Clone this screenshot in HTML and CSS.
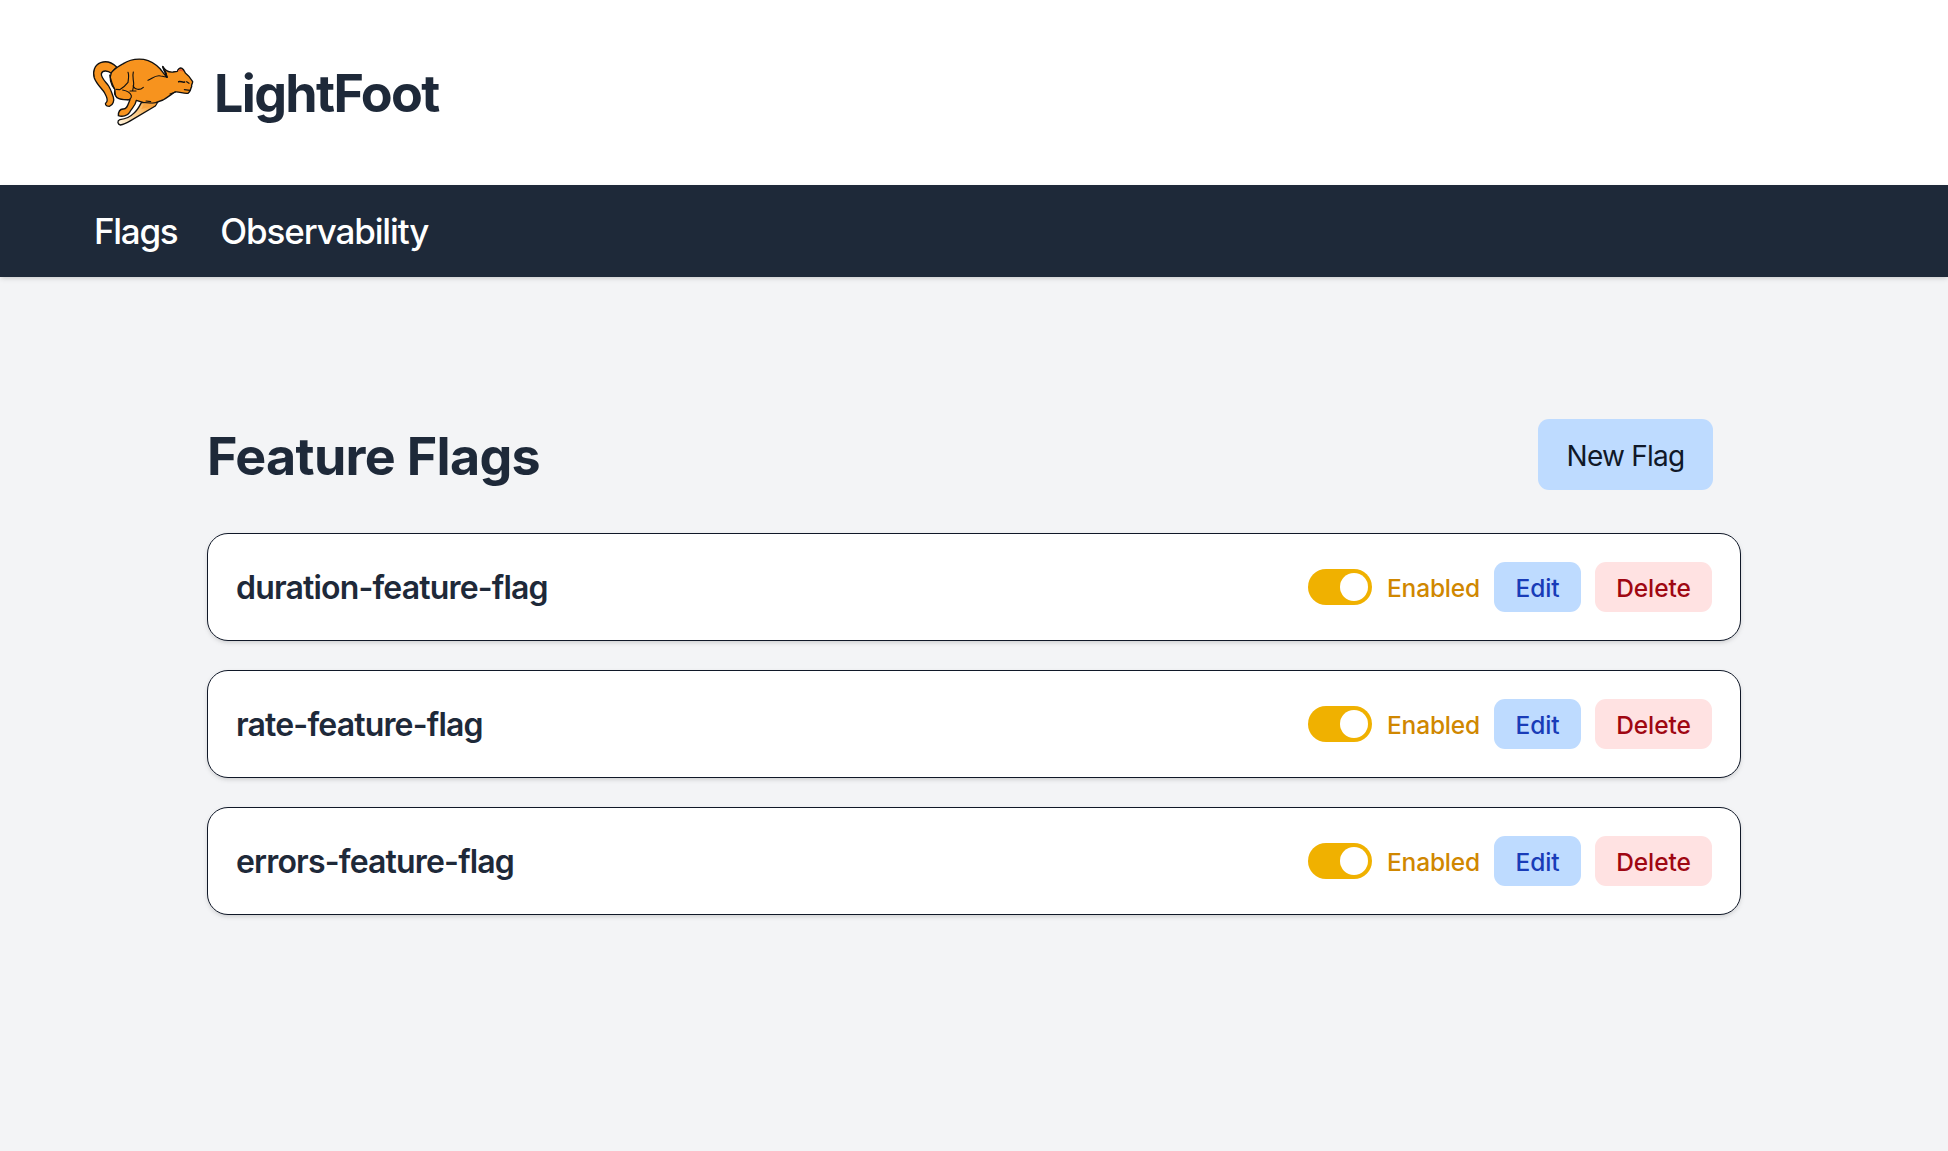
FILE: index.html
```html
<!DOCTYPE html>
<html lang="en">
<head>
<meta charset="utf-8">
<title>LightFoot</title>
<link rel="stylesheet" href="styles.css">
</head>
<body>
<header class="brand">
  <svg class="brand-logo" viewBox="0 0 360 255" role="img" aria-label="LightFoot cat">
    <defs>
      <linearGradient id="leg" x1="215" y1="160" x2="105" y2="220" gradientUnits="userSpaceOnUse">
        <stop offset="0" stop-color="#f7931e"/><stop offset=".45" stop-color="#fbc77f"/><stop offset="1" stop-color="#fff3dc"/>
      </linearGradient>
    </defs>
    <g stroke="#111" stroke-width="4" stroke-linejoin="round" stroke-linecap="round" fill="#f7931e">
      <path fill="url(#leg)" d="M172 158C166 170 160 182 148 191C138 202 122 207 108 209C99 212 100 222 109 225C119 224 130 218 140 212L214 168L222 155Z"/>
      <path d="M98 51C83 37 66 32 50 38C32 45 25 64 31 84C38 104 56 117 62 129C68 141 73 148 68 156C61 161 64 169 76 169C88 165 91 151 88 141C84 132 82 121 74 108C66 96 51 85 52 71C56 59 72 62 82 70Z"/>
      <path d="M82 68C92 55 105 48 118 41C137 28 160 26 179 28C201 32 217 44 229 57C235 65 240 73 244 76C250 80 247 84 250 81C245 69 236 57 236 49C243 62 254 67 267 66L280 64C282 57 288 52 294 55C299 58 302 65 304 69C315 77 321 87 326 95C326 101 321 104 323 110C319 116 320 126 312 130C299 132 285 124 273 126C263 132 250 143 237 150L215 158C199 161 177 159 157 151C154 169 143 174 137 187C130 198 115 201 103 197C103 187 105 178 117 177C130 178 132 162 138 149C124 150 109 149 99 143C92 136 91 127 93 119C82 105 74 87 82 68Z"/>
      <g fill="none" stroke-width="3.4">
        <path d="M77 75C80 87 84 103 92 117M148 66C144 79 149 90 149 101C149 108 148 114 146 121M132 67C136 76 133 87 132 97C125 106 118 113 107 119L97 118M147 108C153 119 167 122 178 112M116 120C127 122 139 127 142 137C143 145 137 149 131 149M138 123L156 123M192 91C205 86 214 74 230 78C239 80 245 81 249 82M244 76L249 82M237 50L247 74M274 126L258 132M301 119L318 121M308 95L315 100M186 153L200 155"/>
        <path stroke-width="4.5" d="M284 95C290 93 296 98 302 96M238 53L247 72"/>
      </g>
      <path d="M92 120C98 127 92 137 101 143C91 139 87 128 92 120Z" fill="#111" stroke="none"/>
      <path d="M281 64C284 57 292 54 295 60L299 66C292 62 287 63 281 64Z" fill="#e95a2b" stroke="none"/>
      <path d="M180 161L218 161L205 169L172 177Z" fill="#f8a440" stroke="none"/>
    </g>
  </svg>
  <h1 class="brand-name">LightFoot</h1>
</header>
<nav class="nav">
  <a class="nav-link nav-link-flags">Flags</a>
  <a class="nav-link">Observability</a>
</nav>
<main class="page">
  <div class="page-head">
    <h2 class="page-title">Feature Flags</h2>
    <button class="new-flag">New Flag</button>
  </div>
  <ul class="flags">
    <li class="flag">
      <span class="flag-name">duration-feature-flag</span>
      <span class="toggle"><span class="knob"></span></span>
      <span class="status">Enabled</span>
      <button class="btn btn-edit">Edit</button>
      <button class="btn btn-delete">Delete</button>
    </li>
    <li class="flag">
      <span class="flag-name">rate-feature-flag</span>
      <span class="toggle"><span class="knob"></span></span>
      <span class="status">Enabled</span>
      <button class="btn btn-edit">Edit</button>
      <button class="btn btn-delete">Delete</button>
    </li>
    <li class="flag">
      <span class="flag-name">errors-feature-flag</span>
      <span class="toggle"><span class="knob"></span></span>
      <span class="status">Enabled</span>
      <button class="btn btn-edit">Edit</button>
      <button class="btn btn-delete">Delete</button>
    </li>
  </ul>
</main>
</body>
</html>
```
FILE: styles.css
```css
* {
  box-sizing: border-box;
}

body {
  margin: 0;
  min-height: 1151px;
  background: #f3f4f6;
  font-family: Inter, "Liberation Sans", sans-serif;
  color: #1e2939;
}

button {
  border: 0;
  font-family: inherit;
}

.brand {
  height: 185px;
  padding: 50px 0 0 84px;
  display: flex;
  align-items: flex-start;
  gap: 10px;
  background: #fff;
}

.brand-logo {
  width: 120px;
  height: 85px;
}

.brand-name {
  margin: 0;
  padding-top: 14px;
  font-size: 52px;
  line-height: 60px;
  font-weight: 700;
  letter-spacing: -1.68px;
}

.nav {
  height: 92px;
  padding: 0 94px;
  display: flex;
  align-items: center;
  gap: 43px;
  background: #1e2939;
  color: #fff;
  box-shadow: 0 2px 5px rgba(0, 0, 0, 0.1), 0 2px 4px -2px rgba(0, 0, 0, 0.1);
}

.nav-link {
  font-size: 35px;
  line-height: 46px;
  font-weight: 500;
  letter-spacing: -1.13px;
}

.nav-link-flags {
  letter-spacing: -1.3px;
}

.page {
  padding: 142px 207px 0;
}

.page-head {
  height: 71px;
  margin-right: 28px;
  display: flex;
  align-items: center;
  justify-content: space-between;
}

.page-title {
  margin: 0;
  padding-top: 5px;
  font-size: 52px;
  line-height: 60px;
  font-weight: 700;
  letter-spacing: -0.7px;
}

.new-flag {
  width: 175px;
  height: 71px;
  padding: 2px 0 0;
  border-radius: 11px;
  background: #bedbff;
  color: #101828;
  font-size: 28px;
  letter-spacing: -0.75px;
}

.flags {
  margin: 43px 0 0;
  padding: 0;
  list-style: none;
  display: flex;
  flex-direction: column;
  gap: 29px;
}

.flag {
  height: 108px;
  padding: 0 28px;
  display: flex;
  align-items: center;
  gap: 14px;
  border: 1px solid #101828;
  border-radius: 21px;
  background: #fff;
  box-shadow: 0 2px 5px rgba(0, 0, 0, 0.1), 0 2px 4px -2px rgba(0, 0, 0, 0.1);
}

.flag-name {
  flex: 1;
  font-size: 32px;
  font-weight: 600;
  letter-spacing: -0.83px;
}

.toggle {
  width: 64px;
  height: 36px;
  padding: 4px;
  display: flex;
  justify-content: flex-end;
  border-radius: 18px;
  background: #f0b100;
}

.knob {
  width: 28px;
  height: 28px;
  border-radius: 50%;
  background: #fff;
}

.status {
  width: 94px;
  padding: 2px 0 0 1px;
  color: #d08700;
  font-size: 24.5px;
  font-weight: 500;
  letter-spacing: -0.18px;
}

.btn {
  height: 50px;
  padding: 2px 0 0;
  border-radius: 11px;
  font-size: 24.5px;
  font-weight: 500;
}

.btn-edit {
  width: 87px;
  background: #bedbff;
  color: #193cb8;
  letter-spacing: -0.1px;
}

.btn-delete {
  width: 117px;
  background: #ffe2e2;
  color: #9f0712;
  letter-spacing: -0.1px;
}
```
